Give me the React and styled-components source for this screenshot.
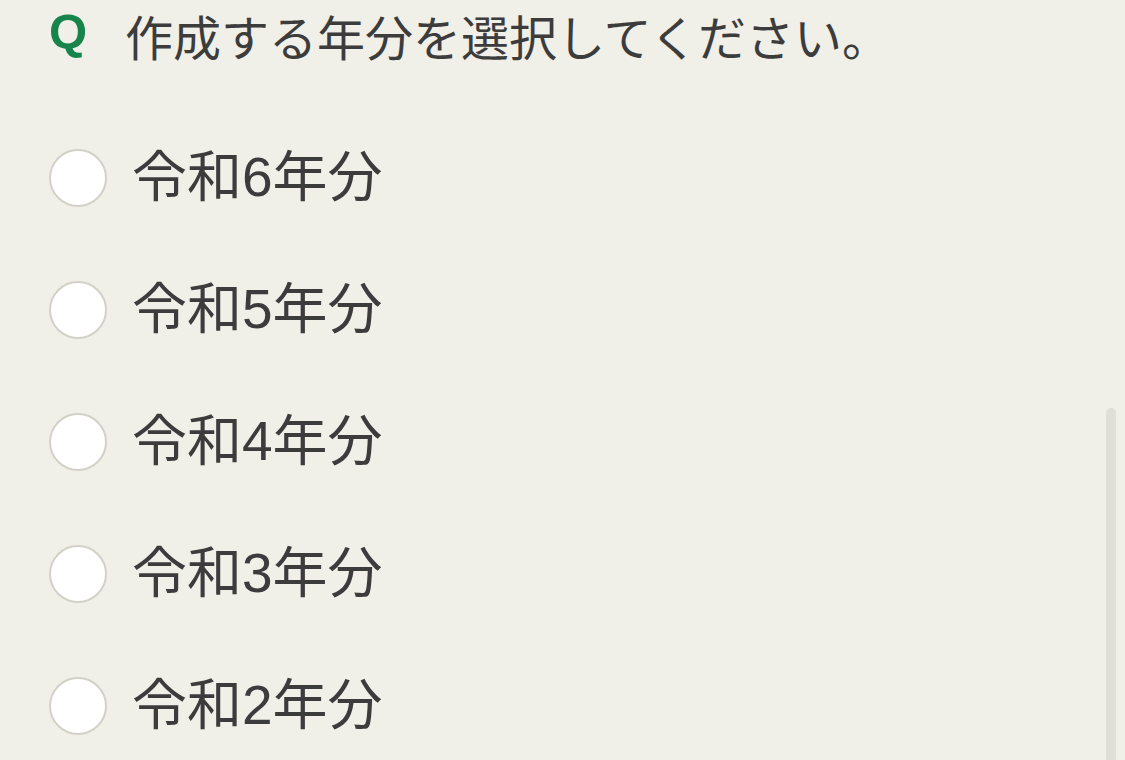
import React from "react"
import styled, { createGlobalStyle } from "styled-components"

const GlobalStyle = createGlobalStyle`
  html, body {
    margin: 0;
    padding: 0;
    background: #f0efe8;
    height: 100%;
    overflow: hidden;
  }
  body {
    font-family: "Liberation Sans", "Noto Sans CJK JP", sans-serif;
    color: #3c3c3c;
  }
`

const Page = styled.div`
  position: relative;
  height: 760px;
  padding: 0 0 0 49px;
  box-sizing: border-box;
`

const Question = styled.div`
  display: flex;
  align-items: flex-start;
  height: 70px;
`

const QMark = styled.span`
  font-family: "Liberation Sans", Arial, sans-serif;
  font-weight: 700;
  font-size: 49px;
  color: #17844b;
  width: 76px;
  line-height: 62px;
`

const QText = styled.span`
  font-family: "Noto Sans CJK JP", sans-serif;
  font-size: 48px;
  line-height: 70px;
  white-space: nowrap;
`

const Options = styled.div`
  display: flex;
  flex-direction: column;
  margin-top: 42px;
`

const Option = styled.label`
  display: flex;
  align-items: center;
  gap: 25px;
  height: 132px;
  cursor: pointer;
`

const Radio = styled.span`
  width: 54px;
  height: 54px;
  border-radius: 50%;
  border: 2px solid #d3d1c8;
  background: #ffffff;
  flex-shrink: 0;
`

const Label = styled.span`
  font-size: 55px;
  line-height: 80px;
  padding-bottom: 2px;
`

const Thumb = styled.div`
  position: absolute;
  right: 9px;
  top: 408px;
  bottom: 0;
  width: 10px;
  border-radius: 5px 5px 0 0;
  background: #e0dfd6;
`

const years = [6, 5, 4, 3, 2]

const App = () => {
  return (
    <>
      <GlobalStyle />
      <Page>
        <Question>
          <QMark>Q</QMark>
          <QText>作成する年分を選択してください。</QText>
        </Question>
        <Options>
          {years.map(y => (
            <Option key={y}>
              <Radio />
              <Label>令和{y}年分</Label>
            </Option>
          ))}
        </Options>
        <Thumb />
      </Page>
    </>
  )
}

export default App
